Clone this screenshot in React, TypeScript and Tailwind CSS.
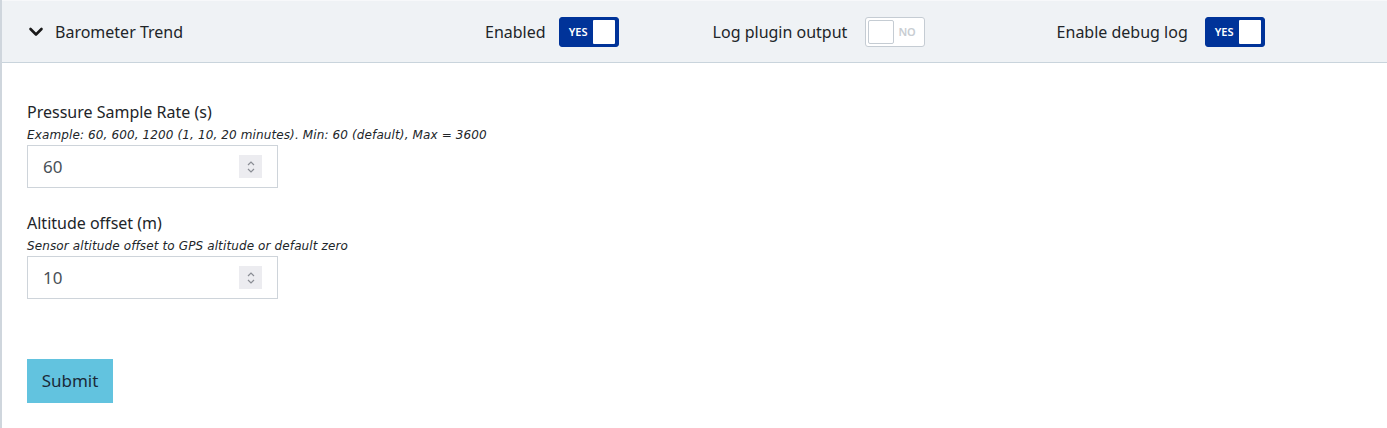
import React from "react";

function Toggle({ on }: { on: boolean }) {
  if (on) {
    return (
      <div className="flex h-[30px] w-[60px] items-center rounded-[3px] border border-[#003399] bg-[#003399] pl-[4px] pr-[3px]">
        <span className="flex-1 text-center text-[11px] font-semibold leading-none text-white">YES</span>
        <div className="h-[24px] w-[22px] rounded-[1px] bg-white" />
      </div>
    );
  }
  return (
    <div className="flex h-[30px] w-[60px] items-center rounded-[3px] border border-[#c5ccd3] bg-white pl-[2px] pr-[3px]">
      <div className="h-[24px] w-[26px] rounded-[2px] border border-[#c5ccd3] bg-white" />
      <span className="flex-1 text-center text-[11px] font-semibold leading-none text-[#c8cdd2]">NO</span>
    </div>
  );
}

function Spinner() {
  return (
    <div className="flex h-[23px] w-[23px] flex-col items-center justify-center bg-[#ececf0]">
      <svg width="10" height="16" viewBox="0 0 10 16" fill="none" stroke="#8a8d94" strokeWidth="1.2">
        <path d="M2 6 L5 3 L8 6" />
        <path d="M2 10 L5 13 L8 10" />
      </svg>
    </div>
  );
}

function Field({ label, hint, value }: { label: string; hint: string; value: string }) {
  return (
    <div className="flex flex-col">
      <div className="h-[24px] text-[16px] leading-[24px] text-[#212529]">{label}</div>
      <div
        className="mt-[3px] h-[17px] text-[12px] italic leading-[17px] tracking-[0.12px] text-[#212529]"
        style={{ fontFamily: '"DejaVu Sans", "Noto Sans", sans-serif' }}
      >
        {hint}
      </div>
      <div className="mt-[1px] flex h-[43px] w-[251px] items-center border border-[#ced4da] bg-white pl-[15px] pr-[15px]">
        <span className="flex-1 text-[17px] text-[#495057]">{value}</span>
        <Spinner />
      </div>
    </div>
  );
}

export default function App() {
  return (
    <div
      className="h-[428px] w-[1387px] overflow-hidden border-l-2 border-[#cfd6dd] bg-white"
      style={{ fontFamily: '"Noto Sans", "Open Sans", sans-serif' }}
    >
      <div className="flex h-[63px] items-center border-b border-t border-[#c9d4dc] border-t-[#f7f8fa] bg-[#eff2f5] pr-[2px]">
        <div className="flex w-[460px] items-center pl-[26px]">
          <svg width="16" height="12" viewBox="0 0 16 12" fill="none" stroke="#1a1a1a" strokeWidth="2.6" strokeLinecap="round" strokeLinejoin="round">
            <path d="M2.5 3 L8 8.5 L13.5 3" />
          </svg>
          <span className="ml-[11px] text-[16px] text-[#212529]">Barometer Trend</span>
        </div>
        <div className="flex items-center pl-[23px]">
          <span className="text-[16px] text-[#212529]">Enabled</span>
          <div className="ml-[13px]"><Toggle on={true} /></div>
        </div>
        <div className="flex items-center pl-[94px]">
          <span className="w-[140px] text-[16px] text-[#212529]">Log plugin output</span>
          <div className="ml-[12px]"><Toggle on={false} /></div>
        </div>
        <div className="flex items-center pl-[132px]">
          <span className="w-[136px] text-[16px] text-[#212529]">Enable debug log</span>
          <div className="ml-[12px]"><Toggle on={true} /></div>
        </div>
      </div>
      <div className="flex flex-col pl-[25px] pt-[37px]">
        <Field label="Pressure Sample Rate (s)" hint="Example: 60, 600, 1200 (1, 10, 20 minutes). Min: 60 (default), Max = 3600" value="60" />
        <div className="mt-[23px]">
          <Field label="Altitude offset (m)" hint="Sensor altitude offset to GPS altitude or default zero" value="10" />
        </div>
        <button className="mt-[60px] h-[44px] w-[86px] bg-[#62c3df] text-[17px] text-[#1b2a38]">Submit</button>
      </div>
    </div>
  );
}
